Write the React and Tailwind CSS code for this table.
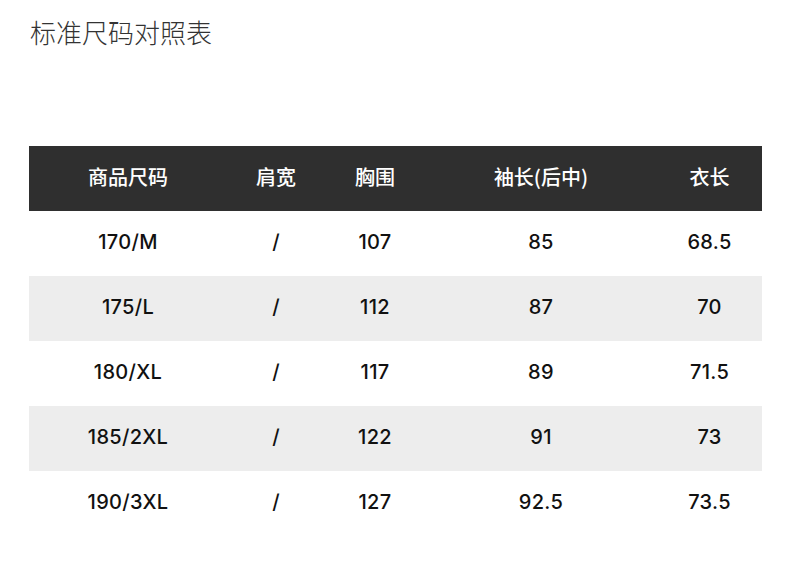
const headers = ['商品尺码', '肩宽', '胸围', '袖长(后中)', '衣长']

const rows = [
  ['170/M', '/', '107', '85', '68.5'],
  ['175/L', '/', '112', '87', '70'],
  ['180/XL', '/', '117', '89', '71.5'],
  ['185/2XL', '/', '122', '91', '73'],
  ['190/3XL', '/', '127', '92.5', '73.5'],
]

const cols = 'grid grid-cols-[198px_98px_100px_232px_105px]'

function App() {
  return (
    <div className="w-[790px] h-[574px] bg-white font-['Inter','Noto_Sans_CJK_SC',sans-serif]">
      <h1 className="pl-[30px] pt-[16px] text-[26px] leading-[32px] font-light text-[#333] font-['Noto_Sans_CJK_SC',sans-serif]">
        标准尺码对照表
      </h1>

      <div className="ml-[29px] mt-[98px] w-[733px]">
        <div className={`${cols} h-[65px] bg-[#2f2f2f] text-white text-[20px] font-medium font-['Noto_Sans_CJK_SC',sans-serif]`}>
          {headers.map((h) => (
            <div key={h} className="flex items-center justify-center pb-[3px]">{h}</div>
          ))}
        </div>
        {rows.map((r, i) => (
          <div key={r[0]} className={`${cols} h-[65px] text-[20px] font-medium tracking-[0.3px] text-[#111] ${i % 2 === 1 ? 'bg-[#ededed]' : 'bg-white'}`}>
            {r.map((c, j) => (
              <div key={j} className="flex items-center justify-center pb-[3px]">{c}</div>
            ))}
          </div>
        ))}
      </div>
    </div>
  )
}

export default App
